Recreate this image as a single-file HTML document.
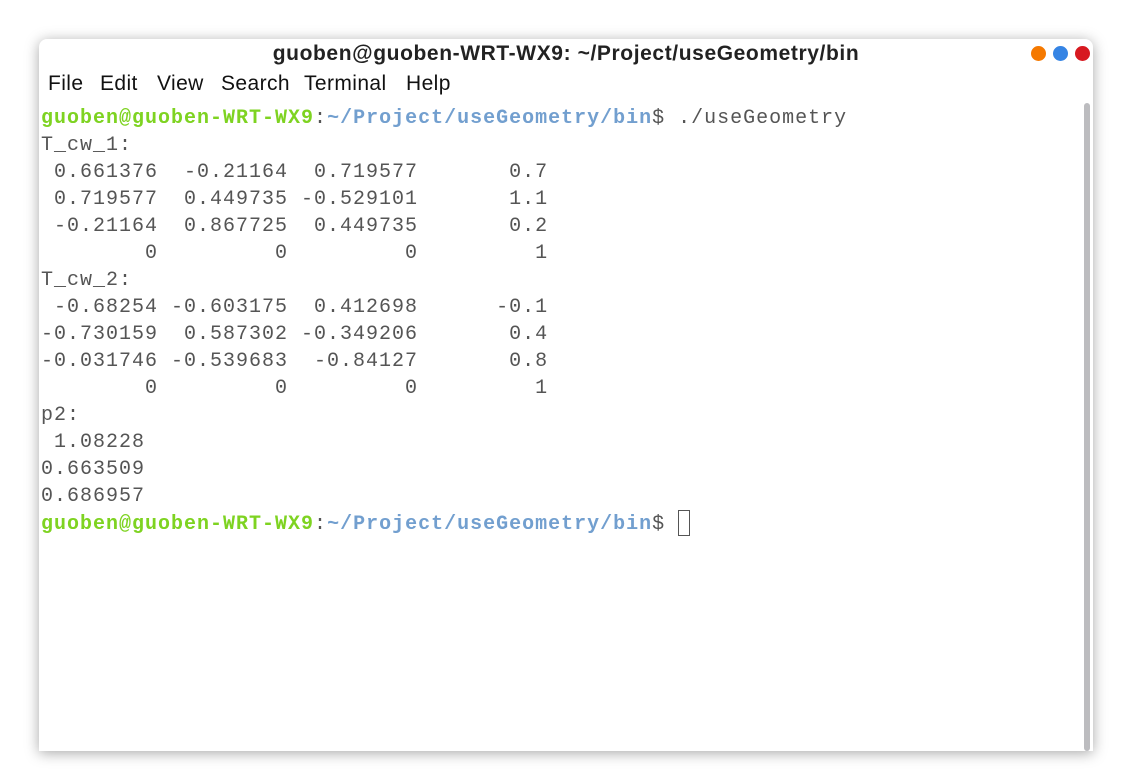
<!DOCTYPE html>
<html><head><meta charset="utf-8"><style>
html,body{margin:0;padding:0;width:1143px;height:781px;background:#fff;overflow:hidden}
.win{position:absolute;left:39px;top:39px;width:1054px;height:712px;background:#fff;border-radius:8px 8px 0 0;box-shadow:0 2px 14px rgba(0,0,0,.35)}
.title{position:absolute;left:0;right:0;top:2px;text-align:center;font:bold 21px "Liberation Sans",sans-serif;letter-spacing:0.6px;color:#222;line-height:26px}
.dot{position:absolute;top:7px;width:15px;height:15px;border-radius:50%}
.menu span{position:absolute;top:32px;font:21px "Liberation Sans",sans-serif;color:#111;line-height:26px;letter-spacing:0.4px}
.term{position:absolute;left:2px;top:66px;font:20px "Liberation Mono",monospace;letter-spacing:1px;line-height:27px;color:#555;white-space:pre;margin:0}
.g{color:#7ed321;font-weight:bold}.b{color:#729fcf;font-weight:bold}
.cur{display:inline-block;width:12px;height:26px;border:1.5px solid #555;vertical-align:-7px;box-sizing:border-box}
.sb{position:absolute;left:1045px;top:64px;width:6px;height:648px;background:#bcbcbf;border-radius:3px}
</style></head><body>
<div class="win">
<div class="title">guoben@guoben-WRT-WX9: ~/Project/useGeometry/bin</div>
<div class="dot" style="left:992px;background:#f57900"></div>
<div class="dot" style="left:1014px;background:#3584e4"></div>
<div class="dot" style="left:1036px;background:#d71920"></div>
<div class="menu"><span style="left:9px">File</span><span style="left:61px">Edit</span><span style="left:118px">View</span><span style="left:182px">Search</span><span style="left:265px">Terminal</span><span style="left:367px">Help</span></div>
<pre class="term"><span class="g">guoben@guoben-WRT-WX9</span>:<span class="b">~/Project/useGeometry/bin</span>$ ./useGeometry
T_cw_1:
 0.661376  -0.21164  0.719577       0.7
 0.719577  0.449735 -0.529101       1.1
 -0.21164  0.867725  0.449735       0.2
        0         0         0         1
T_cw_2:
 -0.68254 -0.603175  0.412698      -0.1
-0.730159  0.587302 -0.349206       0.4
-0.031746 -0.539683  -0.84127       0.8
        0         0         0         1
p2:
 1.08228
0.663509
0.686957
<span class="g">guoben@guoben-WRT-WX9</span>:<span class="b">~/Project/useGeometry/bin</span>$ <span class="cur"></span></pre>
<div class="sb"></div>
</div>
</body></html>
